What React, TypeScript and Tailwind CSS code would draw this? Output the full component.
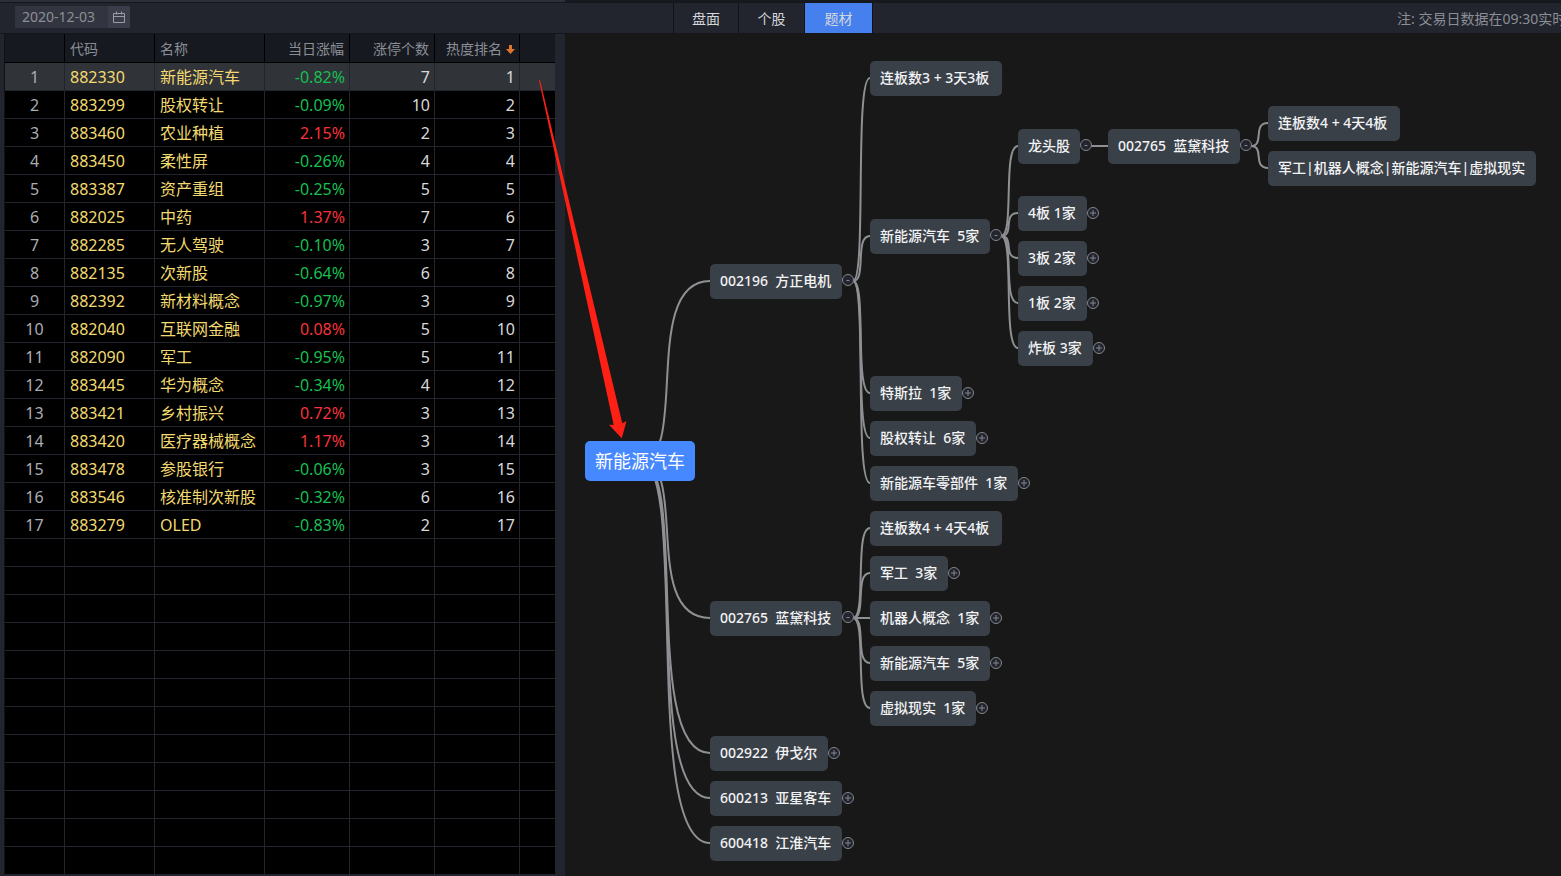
const themes = [
  { code: "882330", name: "新能源汽车", change: "-0.82%", limitUps: 7 },
  { code: "883299", name: "股权转让", change: "-0.09%", limitUps: 10 },
  { code: "883460", name: "农业种植", change: "2.15%", limitUps: 2 },
  { code: "883450", name: "柔性屏", change: "-0.26%", limitUps: 4 },
  { code: "883387", name: "资产重组", change: "-0.25%", limitUps: 5 },
  { code: "882025", name: "中药", change: "1.37%", limitUps: 7 },
  { code: "882285", name: "无人驾驶", change: "-0.10%", limitUps: 3 },
  { code: "882135", name: "次新股", change: "-0.64%", limitUps: 6 },
  { code: "882392", name: "新材料概念", change: "-0.97%", limitUps: 3 },
  { code: "882040", name: "互联网金融", change: "0.08%", limitUps: 5 },
  { code: "882090", name: "军工", change: "-0.95%", limitUps: 5 },
  { code: "883445", name: "华为概念", change: "-0.34%", limitUps: 4 },
  { code: "883421", name: "乡村振兴", change: "0.72%", limitUps: 3 },
  { code: "883420", name: "医疗器械概念", change: "1.17%", limitUps: 3 },
  { code: "883478", name: "参股银行", change: "-0.06%", limitUps: 3 },
  { code: "883546", name: "核准制次新股", change: "-0.32%", limitUps: 6 },
  { code: "883279", name: "OLED", change: "-0.83%", limitUps: 2 },
];

const emptyRows = Array.from({ length: 12 });

type MapNode = {
  id: string;
  parent: string;
  text: string;
  x: number;
  y: number;
  w: number;
  toggle?: "+" | "-";
};

const NODE_HEIGHT = 35;
const ROOT = { x: 20, y: 407, w: 110, h: 40 };

// positions are relative to the mind map canvas
const nodes: MapNode[] = [
  { id: "fz", parent: "root", text: "002196  方正电机", x: 145, y: 230, w: 132, toggle: "-" },
  { id: "ld", parent: "root", text: "002765  蓝黛科技", x: 145, y: 567, w: 132, toggle: "-" },
  { id: "yge", parent: "root", text: "002922  伊戈尔", x: 145, y: 702, w: 118, toggle: "+" },
  { id: "yx", parent: "root", text: "600213  亚星客车", x: 145, y: 747, w: 132, toggle: "+" },
  { id: "jh", parent: "root", text: "600418  江淮汽车", x: 145, y: 792, w: 132, toggle: "+" },

  { id: "fz1", parent: "fz", text: "连板数3 + 3天3板", x: 305, y: 27, w: 132 },
  { id: "fz2", parent: "fz", text: "新能源汽车  5家", x: 305, y: 185, w: 120, toggle: "-" },
  { id: "fz3", parent: "fz", text: "特斯拉  1家", x: 305, y: 342, w: 92, toggle: "+" },
  { id: "fz4", parent: "fz", text: "股权转让  6家", x: 305, y: 387, w: 106, toggle: "+" },
  { id: "fz5", parent: "fz", text: "新能源车零部件  1家", x: 305, y: 432, w: 148, toggle: "+" },

  { id: "ld1", parent: "ld", text: "连板数4 + 4天4板", x: 305, y: 477, w: 132 },
  { id: "ld2", parent: "ld", text: "军工  3家", x: 305, y: 522, w: 78, toggle: "+" },
  { id: "ld3", parent: "ld", text: "机器人概念  1家", x: 305, y: 567, w: 120, toggle: "+" },
  { id: "ld4", parent: "ld", text: "新能源汽车  5家", x: 305, y: 612, w: 120, toggle: "+" },
  { id: "ld5", parent: "ld", text: "虚拟现实  1家", x: 305, y: 657, w: 106, toggle: "+" },

  { id: "lead", parent: "fz2", text: "龙头股", x: 453, y: 95, w: 62, toggle: "-" },
  { id: "b4", parent: "fz2", text: "4板 1家", x: 453, y: 162, w: 69, toggle: "+" },
  { id: "b3", parent: "fz2", text: "3板 2家", x: 453, y: 207, w: 69, toggle: "+" },
  { id: "b1", parent: "fz2", text: "1板 2家", x: 453, y: 252, w: 69, toggle: "+" },
  { id: "zb", parent: "fz2", text: "炸板 3家", x: 453, y: 297, w: 75, toggle: "+" },

  { id: "leadStock", parent: "lead", text: "002765  蓝黛科技", x: 543, y: 95, w: 132, toggle: "-" },
  { id: "leadDays", parent: "leadStock", text: "连板数4 + 4天4板", x: 703, y: 72, w: 132 },
  { id: "leadTags", parent: "leadStock", text: "军工|机器人概念|新能源汽车|虚拟现实", x: 703, y: 117, w: 268 },
];

function linkPath(node: MapNode) {
  const endY = node.y + 17;
  if (node.parent === "root") {
    const x = ROOT.x + ROOT.w / 2;
    const y = ROOT.y + ROOT.h / 2;
    return `M ${x} ${y} C ${x + 50} ${y} ${x} ${endY} ${node.x} ${endY}`;
  }
  const parent = nodes.find((n) => n.id === node.parent)!;
  const x = parent.x + parent.w + 11;
  const y = parent.y + 17;
  return `M ${x} ${y} C ${x + 14} ${y} ${x + 1} ${endY} ${node.x} ${endY}`;
}

function TopBar() {
  return (
    <header>
      <div className="h-[3px] border-b border-[#14161a] bg-[#161a20]">
        <div className="h-[2px] w-[565px] bg-[#2c2e3a]"></div>
      </div>
      <div className="flex h-[31px] border-b border-[#14161a] bg-[#22252e]">
        <div className="flex w-[673px] shrink-0 items-start pt-[3px] pl-[15px]">
          <label className="flex h-[22px] items-center bg-[#32353f]">
            <input
              type="text"
              aria-label="日期"
              defaultValue="2020-12-03"
              className="w-[93px] bg-transparent pl-[7px] text-sm leading-5 text-[#8b8e96] outline-none"
            />
            <span className="flex h-full w-[22px] items-center justify-center bg-[#3b3e4a] text-[#9a9ca3]">
              <svg width="12" height="12" viewBox="0 0 12 12" fill="none" stroke="currentColor">
                <path d="M0.5 2.5h11v9h-11zM0.5 5.5h11M3.5 0.5v3M8.5 0.5v3" />
              </svg>
            </span>
          </label>
        </div>
        <nav className="flex shrink-0 border-l border-[#101216] text-sm text-[#d5d7db]">
          <button className="w-[65px] border-r border-[#101216] pt-px">盘面</button>
          <button className="w-[66px] border-r border-[#101216] pt-px">个股</button>
          <button className="w-[68px] border-r border-[#101216] bg-[#4680ee] pt-px">题材</button>
        </nav>
        <div className="ml-auto w-[164px] overflow-hidden text-sm leading-8 whitespace-nowrap text-[#8b8e96]">
          注: 交易日数据在09:30实时
        </div>
      </div>
    </header>
  );
}

function ThemeTable() {
  return (
    <table className="w-[551px] shrink-0 table-fixed border-separate border-spacing-0 self-start border-l border-[#101216] bg-black">
      <colgroup>
        <col className="w-[60px]" />
        <col className="w-[90px]" />
        <col className="w-[110px]" />
        <col className="w-[85px]" />
        <col className="w-[85px]" />
        <col className="w-[85px]" />
        <col />
      </colgroup>
      <thead>
        <tr className="h-[29px] bg-[#161a20] text-sm text-[#8b8e96] [&>*]:border-b [&>*]:border-black [&>*]:pt-0.5 [&>*]:pb-0 [&>*]:font-normal [&>*:not(:last-child)]:border-r">
          <td></td>
          <th className="pl-[5px] text-left">代码</th>
          <th className="pl-[5px] text-left">名称</th>
          <th className="pr-[5px] text-right">当日涨幅</th>
          <th className="pr-[5px] text-right">涨停个数</th>
          <th className="pr-1">
            <span className="flex items-center justify-end gap-1">
              热度排名
              <svg width="9" height="9" viewBox="0 0 9 9" fill="#e0762e">
                <path d="M3 0h3v4h3L4.5 9L0 4H3z" />
              </svg>
            </span>
          </th>
          <td></td>
        </tr>
      </thead>
      <tbody className="text-base leading-6 text-[#d8d9dc] [&_td]:border-b [&_td]:border-[#22252e] [&_td]:py-0 [&_td:not(:last-child)]:border-r">
        {themes.map((theme, index) => (
          <tr key={theme.code} className={index === 0 ? "h-7 bg-[#303338]" : "h-7"}>
            <td className="text-center text-[#a9adb5]">{index + 1}</td>
            <td className="pl-[5px] text-[#f3da70]">{theme.code}</td>
            <td className="pl-[5px] text-[#f3da70]">{theme.name}</td>
            <td
              className={
                theme.change.startsWith("-")
                  ? "pr-1 text-right text-[#16bf52]"
                  : "pr-1 text-right text-[#f5333a]"
              }
            >
              {theme.change}
            </td>
            <td className="pr-1 text-right">{theme.limitUps}</td>
            <td className="pr-1 text-right">{index + 1}</td>
            <td></td>
          </tr>
        ))}
        {emptyRows.map((_, index) => (
          <tr key={index} className="h-7">
            <td></td>
            <td></td>
            <td></td>
            <td></td>
            <td></td>
            <td></td>
            <td></td>
          </tr>
        ))}
      </tbody>
    </table>
  );
}

function Toggle({ node }: { node: MapNode }) {
  const expanded = node.toggle === "-";
  return (
    <button
      aria-label={expanded ? "收起" : "展开"}
      className="absolute size-3 text-[#85878e]"
      style={{ left: node.x + node.w, top: node.y + (expanded ? 10 : 11) }}
    >
      <svg viewBox="0 0 12 12" className="size-3" fill="none" stroke="currentColor">
        <circle cx="6" cy="6" r="5.5" fill="#22252e" />
        <path d={expanded ? "M4.5 6.5h3" : "M3 6h6M6 3v6"} />
      </svg>
    </button>
  );
}

function MindMap() {
  return (
    <section className="relative min-w-0 flex-1 overflow-hidden bg-[#181818]">
      <svg className="absolute inset-0 h-full w-full" fill="none" stroke="#8f9094" strokeWidth="2">
        {nodes.map((node) => (
          <path key={node.id} d={linkPath(node)} />
        ))}
      </svg>

      <div
        className="absolute flex items-center justify-center rounded-[5px] bg-[#4688ff] text-lg whitespace-nowrap text-white"
        style={{ left: ROOT.x, top: ROOT.y, width: ROOT.w, height: ROOT.h }}
      >
        新能源汽车
      </div>

      {nodes.map((node) => (
        <div
          key={node.id}
          className="absolute flex items-center rounded-[5px] bg-[#3a4048] pb-px pl-[10px] text-sm font-medium whitespace-pre text-[#f2f3f4]"
          style={{ left: node.x, top: node.y, width: node.w, height: NODE_HEIGHT }}
        >
          {node.text}
        </div>
      ))}
      {nodes
        .filter((node) => node.toggle)
        .map((node) => (
          <Toggle key={node.id} node={node} />
        ))}
    </section>
  );
}

export default function App() {
  return (
    <div className="relative flex min-h-screen flex-col overflow-hidden bg-[#22252e] font-['Noto_Sans','Noto_Sans_CJK_SC',sans-serif]">
      <TopBar />
      <main className="flex flex-1 pl-1">
        <ThemeTable />
        <div className="w-[10px] shrink-0 bg-[#22252e]"></div>
        <MindMap />
      </main>

      {/* Pointer from the selected row to the map root */}
      <svg
        className="pointer-events-none absolute top-20 left-[539px] h-[360px] w-[90px]"
        viewBox="0 0 90 360"
        fill="#ff2015"
      >
        <path d="M0 0.5L1 0L83.3 343.3L87.5 341L82.8 358.3L70 344.7L74.7 345Z" />
      </svg>
    </div>
  );
}
